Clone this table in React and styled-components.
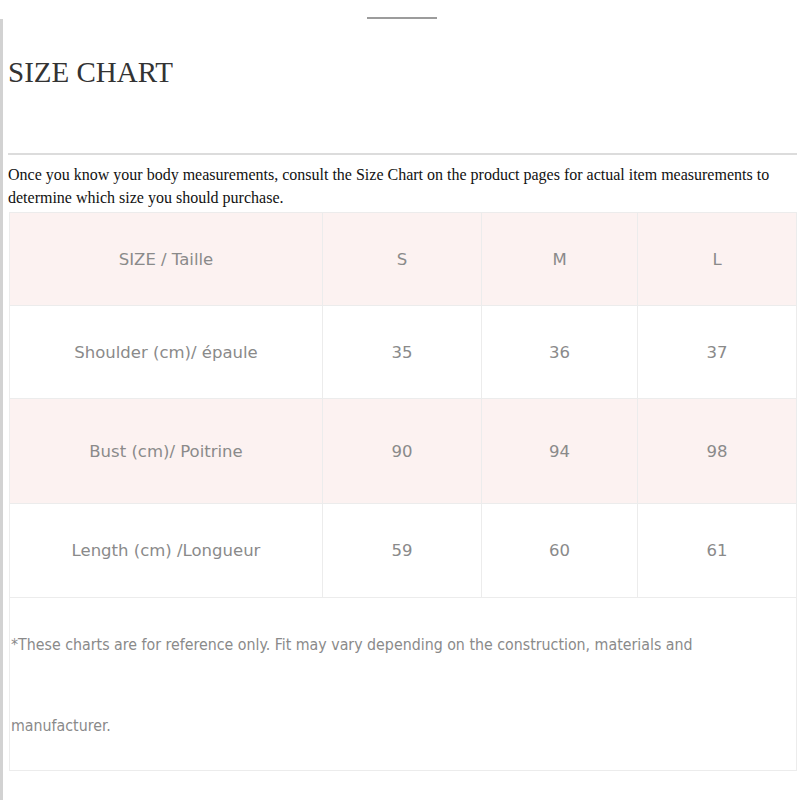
import React from 'react';
import styled, { createGlobalStyle } from 'styled-components';

const GlobalStyle = createGlobalStyle`
    body {
        margin: 0;
        background: #ffffff;
    }
`;

const TopMark = styled.div`
    width: 70px;
    height: 2px;
    background: #9c9c9c;
    margin: 17px 0 0 367px;
`;

const Frame = styled.div`
    border-left: 3px solid #d2d2d2;
    padding: 37px 3px 30px 5px;
`;

const Title = styled.h1`
    margin: 0;
    font-family: 'Liberation Serif', serif;
    font-size: 29px;
    font-weight: 400;
    line-height: 33px;
    color: #333333;
`;

const Rule = styled.hr`
    margin: 64px 0 0;
    border: 0;
    height: 2px;
    background: #dcdcdc;
`;

const Intro = styled.p`
    margin: 8px 0 0;
    font-family: 'Liberation Serif', serif;
    font-size: 16px;
    line-height: 23px;
    color: #111111;
`;

const Table = styled.div`
    display: grid;
    grid-template-columns: 313px 159px 156px 159px;
    margin: 3px 0 0 1px;
    width: 787px;
    border-top: 1px solid #ececec;
    border-left: 1px solid #ececec;
`;

const Cell = styled.div`
    display: flex;
    align-items: center;
    justify-content: center;
    height: ${(p) => p.h}px;
    box-sizing: border-box;
    border-right: 1px solid #ececec;
    border-bottom: 1px solid #ececec;
    background: ${(p) => (p.pink ? '#fcf2f1' : '#ffffff')};
    color: #8a8a8a;
    font-family: 'DejaVu Sans', sans-serif;
    font-size: 16.5px;
`;

const Note = styled.div`
    grid-column: 1 / -1;
    height: 173px;
    box-sizing: border-box;
    padding: 6px 0 0 1px;
    border-right: 1px solid #ececec;
    border-bottom: 1px solid #ececec;
    font-family: 'DejaVu Sans Condensed', 'DejaVu Sans', sans-serif;
    font-stretch: condensed;
    font-size: 15.8px;
    line-height: 81px;
    color: #8a8a8a;
`;

const rows = [
    { label: 'SIZE / Taille', values: ['S', 'M', 'L'], h: 93, pink: true },
    { label: 'Shoulder (cm)/ épaule', values: ['35', '36', '37'], h: 93 },
    { label: 'Bust (cm)/ Poitrine', values: ['90', '94', '98'], h: 105, pink: true },
    { label: 'Length (cm) /Longueur', values: ['59', '60', '61'], h: 94 },
];

const App = () => {
    return (
        <>
            <GlobalStyle />
            <TopMark />
            <Frame>
                <Title>SIZE CHART</Title>
                <Rule />
                <Intro>
                    Once you know your body measurements, consult the Size Chart on the product pages for actual item measurements to determine which size you should purchase.
                </Intro>
                <Table>
                    {rows.map((row) => (
                        <React.Fragment key={row.label}>
                            <Cell h={row.h} pink={row.pink}>
                                {row.label}
                            </Cell>
                            {row.values.map((v) => (
                                <Cell key={v} h={row.h} pink={row.pink}>
                                    {v}
                                </Cell>
                            ))}
                        </React.Fragment>
                    ))}
                    <Note>
                        *These charts are for reference only. Fit may vary depending on the construction, materials and
                        <br />
                        manufacturer.
                    </Note>
                </Table>
            </Frame>
        </>
    );
};

export default App;
